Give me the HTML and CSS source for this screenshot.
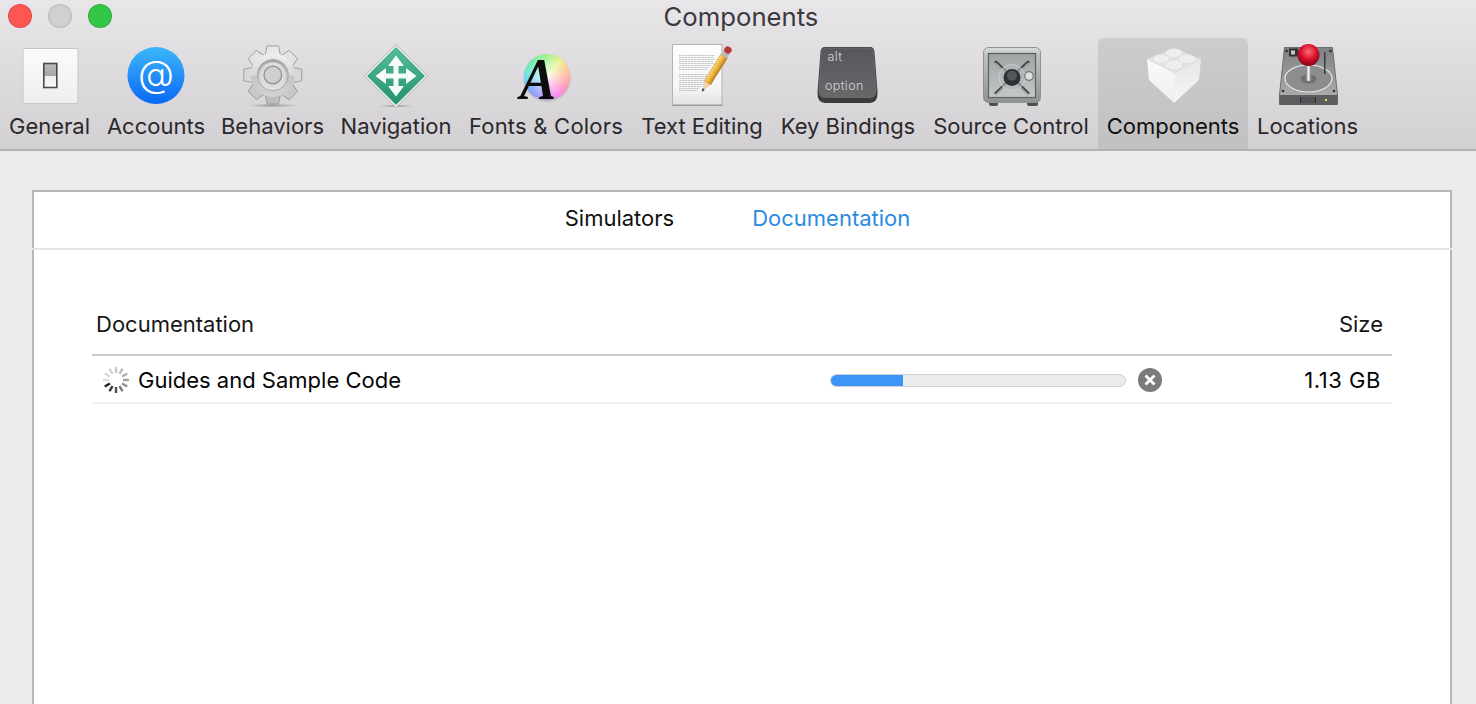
FILE: index.html
```html
<!DOCTYPE html>
<html lang="en">
<head>
<meta charset="utf-8">
<title>Components</title>
<link rel="stylesheet" href="styles.css">
</head>
<body>
<div class="window">
  <header class="chrome">
    <div class="titlebar">
      <div class="lights">
        <span class="light red"></span>
        <span class="light grey"></span>
        <span class="light green"></span>
      </div>
      <div class="title">Components</div>
    </div>
    <nav class="toolbar">
      <div class="tool">
        <svg class="icon" viewBox="0 0 70 66" width="70" height="66">
          <defs>
            <linearGradient id="gBox" x1="0" y1="0" x2="0" y2="1"><stop offset="0" stop-color="#fbfbfc"/><stop offset="1" stop-color="#eceef0"/></linearGradient>
            <linearGradient id="gSw" x1="0" y1="0" x2="0" y2="1"><stop offset="0" stop-color="#bdbdbd"/><stop offset=".5" stop-color="#a6a6a6"/><stop offset=".54" stop-color="#eeeeee"/><stop offset="1" stop-color="#fafafa"/></linearGradient>
          </defs>
          <rect x="8" y="6.500" width="55" height="55" rx="1" fill="url(#gBox)" stroke="#c6c6c8"/>
          <rect x="28.800" y="21.500" width="13" height="24" fill="url(#gSw)" stroke="#4a4a4a" stroke-width="1.600"/>
        </svg>
        <span class="label">General</span>
      </div>
      <div class="tool">
        <svg class="icon" viewBox="0 0 70 66" width="70" height="66">
          <defs>
            <linearGradient id="gAt" x1="0" y1="0" x2="0" y2="1"><stop offset="0" stop-color="#3cb8fb"/><stop offset="1" stop-color="#0a68f4"/></linearGradient>
          </defs>
          <circle cx="35" cy="33.500" r="28.500" fill="url(#gAt)"/>
          <text class="at" x="35" y="45" text-anchor="middle">@</text>
        </svg>
        <span class="label">Accounts</span>
      </div>
      <div class="tool">
        <svg class="icon" viewBox="0 0 70 66" width="70" height="66">
          <defs>
            <linearGradient id="gGear" x1="0" y1="0" x2="0" y2="1"><stop offset="0" stop-color="#efeff0"/><stop offset=".5" stop-color="#d8d8d9"/><stop offset=".52" stop-color="#c6c6c8"/><stop offset="1" stop-color="#d2d2d4"/></linearGradient>
            <linearGradient id="gGearIn" x1="0" y1="0" x2="0" y2="1"><stop offset="0" stop-color="#a2a2a4"/><stop offset="1" stop-color="#ececed"/></linearGradient>
            <radialGradient id="gShadow"><stop offset="0" stop-color="#000" stop-opacity=".3"/><stop offset="1" stop-color="#000" stop-opacity="0"/></radialGradient>
            <polygon id="tooth" points="-8,-18 -5.800,-29 5.800,-29 8,-18" stroke="#97979a" stroke-width=".9" stroke-linejoin="round"/>
          </defs>
          <ellipse cx="34.500" cy="63.500" rx="25" ry="2" fill="url(#gShadow)"/>
          <g transform="translate(34.800 33)">
            <use href="#tooth" fill="#e8e8e9"/>
            <use href="#tooth" fill="#e4e4e5" transform="rotate(45)"/>
            <use href="#tooth" fill="#d8d8d9" transform="rotate(90)"/>
            <use href="#tooth" fill="#c8c8ca" transform="rotate(135)"/>
            <use href="#tooth" fill="#bcbcbe" transform="rotate(180)"/>
            <use href="#tooth" fill="#c8c8ca" transform="rotate(225)"/>
            <use href="#tooth" fill="#d8d8d9" transform="rotate(270)"/>
            <use href="#tooth" fill="#e4e4e5" transform="rotate(315)"/>
            <circle r="22" fill="url(#gGear)"/>
            <circle r="15.500" fill="url(#gGearIn)" stroke="#9a9a9c" stroke-width=".8"/>
            <circle r="12.800" fill="#dcdcdd"/>
            <circle r="8.800" fill="#cfcfd0" stroke="#8e8e90" stroke-width="1.200"/>
          </g>
        </svg>
        <span class="label">Behaviors</span>
      </div>
      <div class="tool">
        <svg class="icon" viewBox="0 0 70 66" width="70" height="66">
          <defs>
            <linearGradient id="gNav" x1="0" y1="0" x2="0" y2="1"><stop offset="0" stop-color="#53bf99"/><stop offset="1" stop-color="#24926a"/></linearGradient>
          </defs>
          <ellipse cx="35" cy="64" rx="18" ry="1.500" fill="url(#gShadow)"/>
          <path d="M35 2.500 66.500 34 35 65.500 3.500 34z" fill="#f3f6f4" stroke="#a6b3ad" stroke-width="1" stroke-linejoin="round"/>
          <path d="M35 5.500 63.500 34 35 62.500 6.500 34z" fill="url(#gNav)" stroke="#1e8660" stroke-width=".7" stroke-linejoin="round"/>
          <path d="M35 13.500 43 24H37.500V31.500H45V26L55.500 34 45 42V36.500H37.500V44H43L35 54.500 27 44H32.500V36.500H25V42L14.500 34 25 26V31.500H32.500V24H27z" fill="#f6faf8"/>
        </svg>
        <span class="label">Navigation</span>
      </div>
      <div class="tool">
        <div class="fontwheel">
          <span class="wheel"></span>
          <span class="serif-a">A</span>
        </div>
        <span class="label wide">Fonts &amp; Colors</span>
      </div>
      <div class="tool">
        <svg class="icon" viewBox="0 0 70 66" width="70" height="66">
          <defs>
            <linearGradient id="gPage" x1="0" y1="0" x2="0" y2="1"><stop offset="0" stop-color="#fdfdfd"/><stop offset=".7" stop-color="#f6f6f6"/><stop offset="1" stop-color="#e2e2e2"/></linearGradient>
            <linearGradient id="gPencil" x1="0" y1="0" x2="1" y2="0"><stop offset="0" stop-color="#f7d676"/><stop offset=".5" stop-color="#f0b43c"/><stop offset="1" stop-color="#b97d20"/></linearGradient>
          </defs>
          <rect x="5.500" y="2.500" width="49.500" height="60.500" fill="url(#gPage)" stroke="#b3b3b3"/>
          <path d="M5 63.300H55.500" stroke="#8f8f8f"/>
          <g class="page-lines">
            <path d="M12 13.500H48M12 15.500H47M12 17.500H48M12 19.500H46M12 21.500H47M12 23.500H44M12 25.500H42M12 27.500H40"/>
            <path d="M12 32.500H40M12 34.500H41M12 36.500H39M12 38.500H38M12 40.500H37M12 42.500H36M12 44.500H34M12 46.500H32M12 48.500H30"/>
          </g>
          <g transform="translate(34.700 50) rotate(32)">
            <path d="M0 0-3.800-11H3.800z" fill="#ecd3a8"/>
            <path d="M0 0-1.200-3.800H1.200z" fill="#222"/>
            <rect x="-3.800" y="-42" width="7.600" height="31" fill="url(#gPencil)" stroke="#a87a28" stroke-width=".4"/>
            <rect x="-3.800" y="-47" width="7.600" height="5" fill="#b9bcbf"/>
            <rect x="-3.800" y="-53" width="7.600" height="7" rx="3.500" fill="#b5383a"/>
          </g>
        </svg>
        <span class="label">Text Editing</span>
      </div>
      <div class="tool">
        <svg class="icon" viewBox="0 0 70 66" width="70" height="66">
          <defs>
            <linearGradient id="gKey" x1="0" y1="0" x2="0" y2="1"><stop offset="0" stop-color="#55575a"/><stop offset="1" stop-color="#66686a"/></linearGradient>
          </defs>
          <path d="M12 5H57Q61 5 61.500 10L64.500 50Q65 61 57 61H12Q4 61 4.500 50L7.500 10Q8 5 12 5z" fill="#3b3c3e"/>
          <path d="M12.500 6H56.500Q60 6 60.500 10L63 47Q63.500 55.500 57 55.500H12Q5.500 55.500 6 47L8.500 10Q9 6 12.500 6z" fill="url(#gKey)" stroke="#727476" stroke-width=".7"/>
          <text class="keytext" x="14.500" y="19">alt</text>
          <text class="keytext" x="12" y="48">option</text>
        </svg>
        <span class="label">Key Bindings</span>
      </div>
      <div class="tool">
        <svg class="icon" viewBox="0 0 70 66" width="70" height="66">
          <defs>
            <linearGradient id="gSafe" x1="0" y1="0" x2="0" y2="1"><stop offset="0" stop-color="#dbdfdf"/><stop offset=".12" stop-color="#bfc3c3"/><stop offset="1" stop-color="#8f9393"/></linearGradient>
            <linearGradient id="gDoor" x1="0" y1="0" x2="0" y2="1"><stop offset="0" stop-color="#9fa3a3"/><stop offset="1" stop-color="#c4c8c8"/></linearGradient>
          </defs>
          <rect x="13" y="58" width="9" height="6" rx="2" fill="#4e5050"/>
          <rect x="51" y="58" width="11" height="6" rx="2" fill="#4e5050"/>
          <rect x="7.500" y="5.500" width="57" height="55" rx="5" fill="url(#gSafe)" stroke="#8e9292"/>
          <rect x="12.500" y="11.500" width="47" height="44" fill="url(#gDoor)" stroke="#5d6161" stroke-width="1.200"/>
          <path d="M20 20 52 51M52 20 20 51" stroke="#45484a" stroke-width="3" stroke-linecap="round"/>
          <path d="M20 21.200 52 52.200M52 21.200 20 52.200" stroke="#eef0f0" stroke-width=".8" stroke-linecap="round"/>
          <circle cx="36" cy="35.500" r="13" fill="#b4b8b8" fill-opacity=".6" stroke="#d2d5d5" stroke-width=".7"/>
          <circle cx="36" cy="35.500" r="8.500" fill="#2e3134"/>
          <circle cx="36" cy="33.800" r="5" fill="#53575b"/>
          <circle cx="53" cy="34" r="4.300" fill="#dcdede" stroke="#6e7272" stroke-width="1.200"/>
        </svg>
        <span class="label">Source Control</span>
      </div>
      <div class="tool selected">
        <svg class="icon" viewBox="0 0 70 66" width="70" height="66">
          <defs>
            <linearGradient id="gLegoL" x1="0" y1="0" x2="0" y2="1"><stop offset="0" stop-color="#fafafa"/><stop offset="1" stop-color="#eeeeee"/></linearGradient>
            <linearGradient id="gLegoR" x1="0" y1="0" x2="0" y2="1"><stop offset="0" stop-color="#e6e6e6"/><stop offset="1" stop-color="#f6f6f6"/></linearGradient>
          </defs>
          <path d="M9 17 36 31 36 61 11 38z" fill="url(#gLegoL)"/>
          <path d="M63 17 36 31 36 61 61 38z" fill="url(#gLegoR)"/>
          <path d="M36 6 63 17 36 31 9 17z" fill="#e2e2e2"/>
          <g fill="#eeeeee" stroke="#d2d2d2" stroke-width=".5">
            <ellipse cx="36" cy="11" rx="8.500" ry="4.500"/>
            <ellipse cx="23" cy="17" rx="8.500" ry="4.500"/>
            <ellipse cx="49" cy="17" rx="8.500" ry="4.500"/>
            <ellipse cx="36" cy="23" rx="9" ry="5"/>
          </g>
        </svg>
        <span class="label">Components</span>
      </div>
      <div class="tool">
        <svg class="icon" viewBox="0 0 70 66" width="70" height="66">
          <defs>
            <linearGradient id="gHdd" x1="0" y1="0" x2="0" y2="1"><stop offset="0" stop-color="#7f8183"/><stop offset="1" stop-color="#b0b2b4"/></linearGradient>
            <radialGradient id="gBall" cx=".5" cy=".35" r=".6"><stop offset="0" stop-color="#ff6b78"/><stop offset=".6" stop-color="#d8102a"/><stop offset="1" stop-color="#8e0718"/></radialGradient>
            <linearGradient id="gStem" x1="0" y1="0" x2="1" y2="0"><stop offset="0" stop-color="#7d7d7d"/><stop offset=".5" stop-color="#f7f7f7"/><stop offset="1" stop-color="#7d7d7d"/></linearGradient>
          </defs>
          <path d="M11.500 5.500H59.500L64.500 53V62.500H6.500V53z" fill="url(#gHdd)" stroke="#6c6e70"/>
          <rect x="6.500" y="53" width="58" height="10" rx="1" fill="#5c5e60"/>
          <rect x="27" y="55" width="16" height="6" fill="#2f3032"/>
          <path d="M29 55V61M31 55V61M33 55V61M35 55V61M37 55V61M39 55V61M41 55V61" stroke="#85878a" stroke-width=".8"/>
          <rect x="52" y="57" width="2" height="2" fill="#e7e23f"/>
          <ellipse cx="35.500" cy="36.500" rx="23.500" ry="13.500" fill="#8b8d8f" stroke="#e8e9ea" stroke-width="1.200"/>
          <ellipse cx="35.500" cy="37" rx="8" ry="4.500" fill="#6f7173"/>
          <g fill="#2c2d2f">
            <circle cx="13.500" cy="9" r="1.300"/>
            <circle cx="57.500" cy="9" r="1.300"/>
            <circle cx="10" cy="49" r="1.300"/>
            <circle cx="61" cy="49" r="1.300"/>
          </g>
          <rect x="16" y="6.500" width="9" height="8" fill="#303133"/>
          <rect x="18" y="8.500" width="4" height="4" fill="#c8c8c8"/>
          <rect x="51" y="10" width="1.500" height="22" fill="#3a3b3d"/>
          <rect x="33" y="20" width="5" height="19" rx="1.500" fill="url(#gStem)"/>
          <circle cx="35.500" cy="13" r="11" fill="url(#gBall)"/>
        </svg>
        <span class="label">Locations</span>
      </div>
    </nav>
  </header>

  <main class="panel">
    <div class="tabs">
      <span class="tab">Simulators</span>
      <span class="tab active">Documentation</span>
    </div>
    <section class="table">
      <div class="thead">
        <span>Documentation</span>
        <span>Size</span>
      </div>
      <div class="row">
        <svg class="spinner" viewBox="-14 -14 28 28" width="28" height="28">
          <g stroke-width="2.400" stroke-linecap="butt" stroke="#1e1e1e">
            <line y1="-7" y2="-13" transform="rotate(240)" stroke-opacity="1"/>
            <line y1="-7" y2="-13" transform="rotate(210)" stroke-opacity=".9"/>
            <line y1="-7" y2="-13" transform="rotate(180)" stroke-opacity=".78"/>
            <line y1="-7" y2="-13" transform="rotate(150)" stroke-opacity=".62"/>
            <line y1="-7" y2="-13" transform="rotate(120)" stroke-opacity=".5"/>
            <line y1="-7" y2="-13" transform="rotate(90)" stroke-opacity=".42"/>
            <line y1="-7" y2="-13" transform="rotate(60)" stroke-opacity=".36"/>
            <line y1="-7" y2="-13" transform="rotate(30)" stroke-opacity=".3"/>
            <line y1="-7" y2="-13" stroke-opacity=".25"/>
            <line y1="-7" y2="-13" transform="rotate(330)" stroke-opacity=".2"/>
            <line y1="-7" y2="-13" transform="rotate(300)" stroke-opacity=".17"/>
            <line y1="-7" y2="-13" transform="rotate(270)" stroke-opacity=".15"/>
          </g>
        </svg>
        <span class="name">Guides and Sample Code</span>
        <div class="progress"><div class="fill" style="width:24.8%"></div></div>
        <svg class="cancel" viewBox="0 0 24 24" width="24" height="24">
          <circle cx="12" cy="12" r="12" fill="#7b7b7b"/>
          <path d="M7.500 7.500 16.500 16.500M16.500 7.500 7.500 16.500" stroke="#fff" stroke-width="2.800"/>
        </svg>
        <span class="size">1.13 GB</span>
      </div>
    </section>
  </main>
</div>
</body>
</html>
```
FILE: styles.css
```css
* { box-sizing: border-box; }

html, body {
  margin: 0;
  padding: 0;
  height: 704px;
  overflow: hidden;
}

body {
  font-family: "Inter", "Liberation Sans", sans-serif;
  font-size: 22px;
  background: #ececec;
  color: #111;
}

.window {
  height: 704px;
  overflow: hidden;
  display: flex;
  flex-direction: column;
}

.chrome {
  flex: none;
  height: 151px;
  background: linear-gradient(#e8e6e8, #d2d0d2);
  border-bottom: 2px solid #b4b3b4;
}

.titlebar {
  height: 38px;
  display: flex;
  align-items: flex-start;
}

.lights {
  flex: none;
  display: flex;
  gap: 16px;
  padding: 4px 0 0 8px;
}

.light {
  width: 24px;
  height: 24px;
  border-radius: 50%;
  border: 1px solid rgba(0, 0, 0, .12);
}

.red { background: #fc5753; }
.grey { background: #d0d0d0; }
.green { background: #33c748; }

.title {
  flex: 1;
  text-align: center;
  padding-right: 106px;
  font-size: 25.7px;
  line-height: 34px;
  color: #3b393e;
}

.toolbar {
  display: grid;
  grid-template-columns: 99px 114px 119px 128px 172px 140px 152px 174px 150px 119px;
  height: 111px;
}

.tool {
  display: flex;
  flex-direction: column;
  align-items: center;
  padding-top: 4px;
  border-radius: 6px 6px 0 0;
}

.tool.selected {
  background: linear-gradient(#cdcccd, #c2c1c2);
}

.icon { display: block; flex: none; }

.label {
  white-space: nowrap;
  color: #2a282c;
  line-height: 32px;
  margin-top: 2px;
}

.label.wide { letter-spacing: .22px; }

.selected .label { color: #0f0f10; }

.at {
  font-family: "Inter", sans-serif;
  font-size: 37px;
  font-weight: 300;
  fill: #fff;
}

.keytext {
  font-family: "Inter", sans-serif;
  font-size: 12.5px;
  font-weight: 300;
  fill: #d4d5d6;
  letter-spacing: .4px;
}

.page-lines path {
  stroke: #b0b0b0;
  stroke-width: .7;
  stroke-dasharray: 2.400 .5;
  fill: none;
}

.fontwheel {
  position: relative;
  flex: none;
  width: 70px;
  height: 66px;
}

.wheel {
  position: absolute;
  left: 13px;
  top: 12px;
  width: 46px;
  height: 46px;
  border-radius: 50%;
  box-shadow: 0 1px 2px rgba(0, 0, 0, .25);
  background:
    radial-gradient(circle, rgba(255, 255, 255, .9), rgba(255, 255, 255, .08) 75%),
    conic-gradient(#8cf07a, #e8f070 40deg, #ffb080 80deg, #ff80b0 120deg, #ff70e8 150deg, #b080ff 190deg, #6090ff 230deg, #50d8e8 270deg, #50e8a0 310deg, #8cf07a);
}

.serif-a {
  position: absolute;
  left: 9px;
  top: 4px;
  font-family: "Liberation Serif", serif;
  font-style: italic;
  font-weight: 700;
  font-size: 60px;
  line-height: 66px;
  color: #0b0b0b;
  transform: scaleX(.9);
  transform-origin: left center;
}

.panel {
  flex: none;
  height: 600px;
  margin: 39px 24px 0 32px;
  background: #fff;
  border: 2px solid #b7b7b7;
}

.tabs {
  height: 58px;
  margin: 0 -2px;
  display: flex;
  justify-content: center;
  align-items: center;
  gap: 78px;
  padding: 0 9px 4px 0;
  border-bottom: 2px solid #e4e4e4;
  position: relative;
}

.tab { color: #111; }
.tab.active { color: #2b8be0; }

.table {
  margin: 0 58px;
}

.thead {
  display: flex;
  justify-content: space-between;
  align-items: flex-end;
  height: 106px;
  padding: 0 9px 14px 4px;
  border-bottom: 2px solid #c9c9c9;
  line-height: 32px;
  color: #161616;
}

.row {
  display: flex;
  align-items: center;
  height: 48px;
  padding: 2px 11px 0 10px;
  border-bottom: 2px solid #f2f2f2;
}

.spinner { flex: none; margin-right: 8px; }

.name {
  flex: 1;
  color: #050505;
}

.progress {
  flex: none;
  width: 296px;
  height: 13px;
  background: #ececec;
  border: 1px solid #cfcfcf;
  border-radius: 7px;
  overflow: hidden;
}

.fill {
  height: 100%;
  margin: -1px 0 -1px -1px;
  min-height: 13px;
  background: #3d94f9;
}

.cancel { flex: none; margin-left: 12px; }

.size {
  flex: none;
  width: 219px;
  text-align: right;
  letter-spacing: .55px;
  color: #050505;
}
```
